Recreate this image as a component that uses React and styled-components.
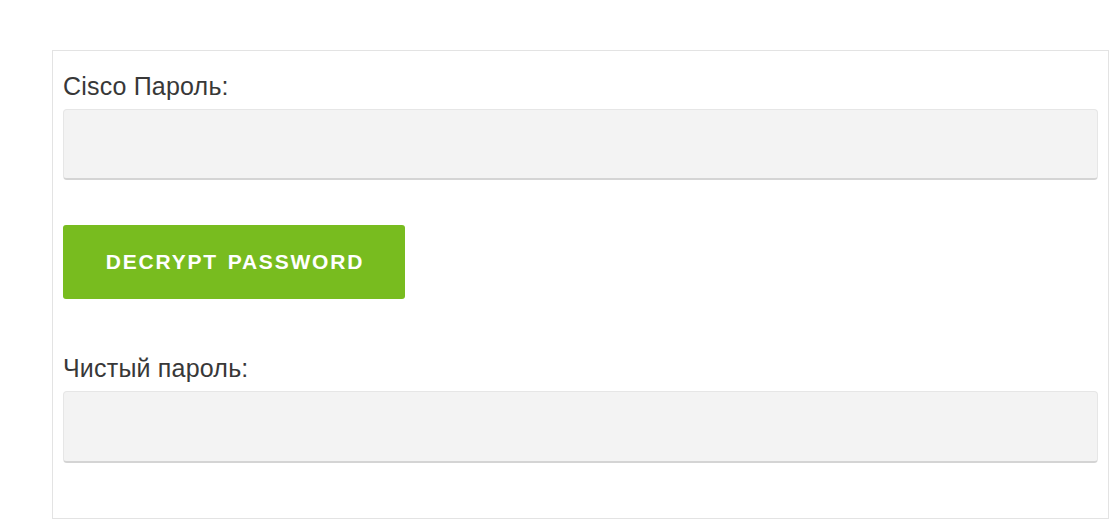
import React from "react";
import styled, { createGlobalStyle } from "styled-components";

const Global = createGlobalStyle`
  html, body { margin: 0; padding: 0; background: #ffffff; }
  body { font-family: "Liberation Sans", Arial, sans-serif; }
`;

const Page = styled.div`
  padding: 50px 10px 0 52px;
`;

const Panel = styled.div`
  border: 1px solid #e3e3e3;
  padding: 21px 10px 55px;
  display: flex;
  flex-direction: column;
  align-items: stretch;
`;

const Label = styled.label`
  display: block;
  font-size: 25px;
  line-height: 28px;
  letter-spacing: 0.2px;
  color: #383838;
  margin: ${(p) => (p.$spaced ? "55px" : "0")} 0 9px;
`;

const Field = styled.textarea`
  display: block;
  box-sizing: border-box;
  height: ${(p) => p.$h || 71}px;
  width: 100%;
  margin: 0;
  resize: none;
  background: #f3f3f3;
  border: 1px solid #e6e6e6;
  border-bottom: 2px solid #d4d4d4;
  border-radius: 4px;
  outline: none;
  font-family: inherit;
`;

const Button = styled.button`
  align-self: flex-start;
  margin-top: 45px;
  width: 342px;
  height: 74px;
  border: none;
  border-radius: 3px;
  background: #78bc1f;
  color: #ffffff;
  font-family: "Liberation Sans", Arial, sans-serif;
  font-weight: bold;
  font-size: 21px;
  letter-spacing: 1.8px;
  word-spacing: 2px;
  text-transform: uppercase;
  padding: 0 0 0 2px;
  cursor: pointer;
`;

export default function App() {
  return (
    <>
      <Global />
      <Page>
        <Panel>
          <Label>Cisco Пароль:</Label>
          <Field />
          <Button>Decrypt Password</Button>
          <Label $spaced>Чистый пароль:</Label>
          <Field $h={72} />
        </Panel>
      </Page>
    </>
  );
}
